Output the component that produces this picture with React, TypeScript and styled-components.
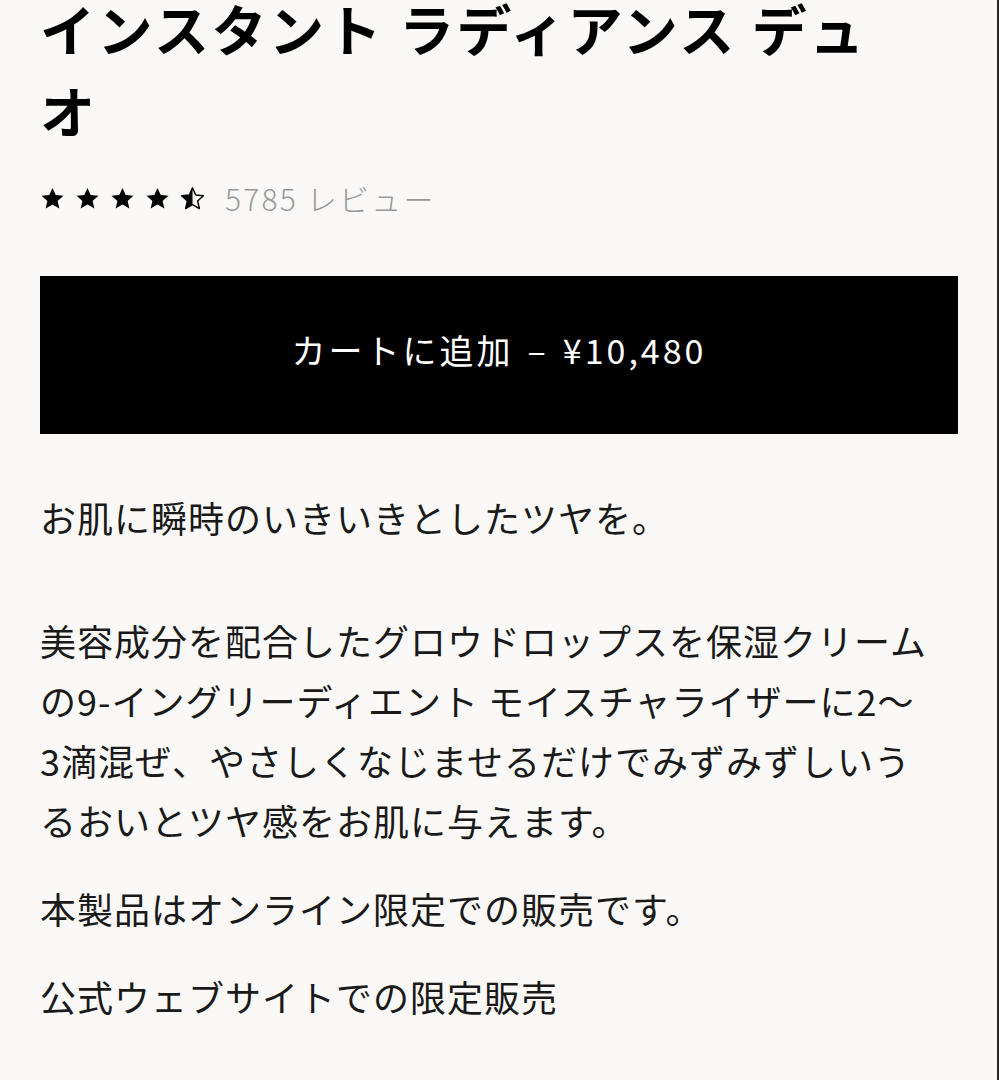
import styled, { createGlobalStyle } from 'styled-components';

const GlobalStyle = createGlobalStyle`
  html, body {
    margin: 0;
    padding: 0;
    background: #faf9f7;
  }

  body {
    font-family: "Noto Sans CJK JP", "Noto Sans", sans-serif;
    color: #111;
    overflow: hidden;
  }
`;

const Page = styled.main`
  box-sizing: border-box;
  width: 999px;
  min-height: 1080px;
  padding: 0 39px 0 40px;
  border-right: 2px solid #2a2a2a;
  overflow: hidden;
`;

const Title = styled.h1`
  max-width: 850px;
  margin: -14px 0 0;
  font-size: 55px;
  line-height: 82px;
  font-weight: 700;
  letter-spacing: 2.5px;
  color: #000;
`;

const RatingRow = styled.div`
  display: flex;
  align-items: center;
  height: 40px;
  margin-top: 28px;
  gap: 20px;
`;

const Stars = styled.div`
  display: flex;
  align-items: center;
  gap: 10px;

  svg {
    width: 25px;
    height: 25px;
    display: block;
  }
`;

const ReviewCount = styled.span`
  font-size: 30px;
  font-weight: 300;
  color: #999;
  letter-spacing: 2.2px;
`;

const CartButton = styled.button`
  box-sizing: border-box;
  display: flex;
  align-items: center;
  justify-content: center;
  width: 100%;
  height: 158px;
  margin-top: 58px;
  padding: 0 0 12px;
  border: none;
  background: #000;
  color: #fff;
  font-family: inherit;
  font-size: 34px;
  letter-spacing: 3px;
  cursor: pointer;

  span {
    margin: 0 14px;
  }
`;

const Description = styled.div`
  margin-top: 53px;
`;

const Paragraph = styled.p<{ $gap?: number }>`
  max-width: 890px;
  margin: 0 0 ${(p) => p.$gap ?? 28}px;
  font-size: 36px;
  line-height: 60px;
  letter-spacing: 1px;
  color: #1a1a1a;
`;

const STAR = 'M12 1.8l3.1 6.9 7.4.7-5.6 5 1.7 7.3L12 17.8l-6.6 3.9 1.7-7.3-5.6-5 7.4-.7z';

function Star({ half }: { half?: boolean }) {
  if (half) {
    return (
      <svg viewBox="0 0 24 24">
        <defs>
          <clipPath id="left-half">
            <rect x="0" y="0" width="12" height="24" />
          </clipPath>
        </defs>
        <path d={STAR} fill="none" stroke="#000" strokeWidth="1.4" strokeLinejoin="round" />
        <path d={STAR} fill="#000" clipPath="url(#left-half)" />
      </svg>
    );
  }
  return (
    <svg viewBox="0 0 24 24">
      <path d={STAR} fill="#000" />
    </svg>
  );
}

export default function App() {
  return (
    <>
      <GlobalStyle />
      <Page>
        <Title>インスタント ラディアンス デュオ</Title>
        <RatingRow>
          <Stars>
            <Star />
            <Star />
            <Star />
            <Star />
            <Star half />
          </Stars>
          <ReviewCount>5785 レビュー</ReviewCount>
        </RatingRow>
        <CartButton>
          カートに追加<span>–</span>¥10,480
        </CartButton>
        <Description>
          <Paragraph $gap={63}>お肌に瞬時のいきいきとしたツヤを。</Paragraph>
          <Paragraph>
            美容成分を配合したグロウドロップスを保湿クリームの9-イングリーディエント モイスチャライザーに2〜3滴混ぜ、やさしくなじませるだけでみずみずしいうるおいとツヤ感をお肌に与えます。
          </Paragraph>
          <Paragraph>本製品はオンライン限定での販売です。</Paragraph>
          <Paragraph>公式ウェブサイトでの限定販売</Paragraph>
        </Description>
      </Page>
    </>
  );
}
